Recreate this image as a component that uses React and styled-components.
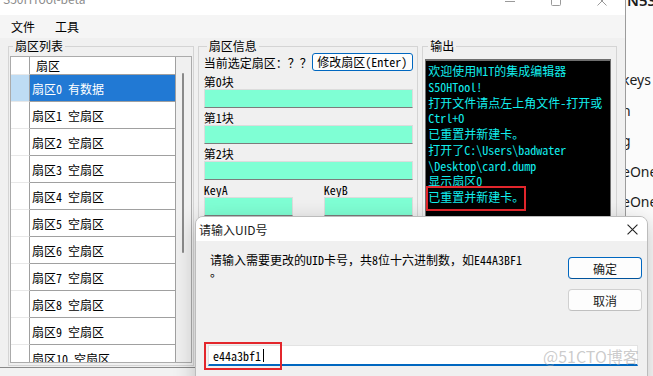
import React from 'react';
import styled, { createGlobalStyle } from 'styled-components';

const SONG = `"Noto Sans Mono CJK SC", "Noto Sans CJK SC", monospace`;
const UI = `"Noto Sans CJK SC", "Noto Sans", sans-serif`;

const GlobalStyle = createGlobalStyle`
    html, body {
        margin: 0;
        padding: 0;
        width: 653px;
        height: 376px;
        overflow: hidden;
        background: #f2f2f2;
    }
    * {
        box-sizing: border-box;
    }
`;

const Desktop = styled.div`
    position: relative;
    width: 653px;
    height: 376px;
    overflow: hidden;
    background: #f2f2f2;
    font-family: ${SONG};
    font-size: 12px;
    color: #000;
`;

/* window behind, only its left strip shows at the right edge */
const BackWindow = styled.div`
    position: absolute;
    left: 600px;
    top: -9px;
    width: 120px;
    height: 400px;
    background: #fbfbfb;
    font-family: 'Noto Sans', sans-serif;
    font-size: 14px;
    color: #1c1c1c;
    padding-left: 22px;
`;

const BackHead = styled.div`
    height: 74px;
    font-size: 15px;
    font-weight: 600;
    padding-left: 5px;
    line-height: 18px;
`;

const BackLine = styled.div`
    height: 30.5px;
    line-height: 30.5px;
`;

const MainWindow = styled.div`
    position: absolute;
    left: 0;
    top: -13px;
    width: 626px;
    height: 381px;
    background: #f0f0f0;
    border-right: 1px solid #9c9c9c;
    border-bottom: 1px solid #8a8a8a;
    display: flex;
    flex-direction: column;
`;

const TitleBar = styled.div`
    height: 28px;
    flex-shrink: 0;
    background: #fff;
    display: flex;
    align-items: center;
    padding-left: 3px;
    font-family: ${UI};
    font-size: 12px;
    color: #8c8c8c;
`;

const TitleText = styled.span`
    margin-top: -5px;
`;

const TitleControls = styled.div`
    margin-left: auto;
    display: flex;
    height: 100%;
`;

const TitleButton = styled.div`
    width: 46px;
    height: 100%;
    display: flex;
    align-items: center;
    justify-content: center;
    color: #9a9a9a;
`;

const MenuBar = styled.div`
    height: 23px;
    flex-shrink: 0;
    background: #f5f5f5;
    display: flex;
    align-items: center;
    padding-left: 1px;
`;

const MenuItem = styled.div`
    padding: 0 10px;
    line-height: 23px;
`;

const Body = styled.div`
    flex: 1;
    display: flex;
    align-items: flex-start;
    gap: 4px;
    padding: 1px 8px 0 8px;
`;

const Group = styled.fieldset`
    margin: 0;
    width: ${p => p.$w}px;
    height: 327px;
    min-width: 0;
    padding: ${p => p.$pad};
    border: 1px solid #d4d4d4;
    display: flex;
    flex-direction: column;
`;

const GroupTitle = styled.legend`
    padding: 0 2px;
    margin-left: 3px;
    line-height: 14px;
    font-size: 12px;
`;

/* ---- sector list ---- */
const ListView = styled.div`
    flex: 1;
    margin-bottom: 2px;
    display: flex;
    border: 1px solid #ababab;
    background: #fff;
    overflow: hidden;
`;

const Table = styled.div`
    width: 165px;
    display: flex;
    flex-direction: column;
`;

const Row = styled.div`
    display: flex;
    flex-shrink: 0;
    height: ${p => (p.$head ? 18 : 27)}px;
`;

const IndexCell = styled.div`
    width: 19px;
    border-right: 1px solid #a0a0a0;
    border-bottom: 1px solid #e8e8e8;
    background: ${p => (p.$sel ? '#bedcf4' : '#fff')};
`;

const NameCell = styled.div`
    flex: 1;
    display: flex;
    align-items: center;
    white-space: nowrap;
    padding-left: ${p => (p.$head ? 6 : 2)}px;
    border-right: 1px solid #a0a0a0;
    border-bottom: 1px solid #a0a0a0;
    background: ${p => (p.$sel ? '#2179d4' : '#fff')};
    color: ${p => (p.$sel ? '#fff' : '#000')};
`;

const ScrollTrack = styled.div`
    flex: 1;
    background: #f0f0f0;
    padding-top: 16px;
`;

const ScrollThumb = styled.div`
    width: 2px;
    height: 180px;
    margin: 0 auto;
    border-radius: 1px;
    background: #8a8a8a;
`;

/* ---- sector info ---- */
const InfoTop = styled.div`
    display: flex;
    align-items: center;
    height: 18px;
    margin-bottom: 1px;
    padding-right: 1px;
    white-space: nowrap;
`;

const EditButton = styled.button`
    margin-left: auto;
    flex-shrink: 0;
    width: 101px;
    height: 18px;
    padding: 0;
    border: 1px solid #0067c0;
    border-radius: 3px;
    background: #fdfdfd;
    font-family: ${SONG};
    font-size: 12px;
    color: #000;
    line-height: 16px;
`;

const FieldLabel = styled.div`
    margin-top: 2px;
    height: 15px;
    line-height: 15px;
`;

const HexBox = styled.div`
    height: 19px;
    background: #7fffd4;
    border: 1px solid #dcdcdc;
    border-bottom-color: #7c7c7c;
`;

const KeyRow = styled.div`
    display: grid;
    grid-template-columns: 89px 89px;
    column-gap: 31px;
`;

/* ---- output ---- */
const Console = styled.div`
    flex: 1;
    margin: 6px 0 2px;
    padding: 2px 2px;
    background: #000;
    border: 1px solid #6f6f6f;
    border-top-width: 2px;
    color: #12eeee;
    line-height: 15.75px;
    white-space: nowrap;
    overflow: hidden;
`;

const Marked = styled.span`
    position: relative;
    display: inline-block;
    height: 15.75px;
    &::after {
        content: '';
        position: absolute;
        left: -2px;
        right: -2px;
        top: -3px;
        bottom: -6px;
        border: 2px solid #e3262c;
    }
`;

/* ---- dialog ---- */
const Dialog = styled.div`
    position: absolute;
    left: 195px;
    top: 216px;
    width: 453px;
    height: 190px;
    background: #f0f0f0;
    border: 1px solid #bcbcbc;
    border-radius: 8px;
    box-shadow: 0 6px 22px rgba(0, 0, 0, 0.22);
    overflow: hidden;
    display: flex;
    flex-direction: column;
`;

const DialogTitleBar = styled.div`
    height: 24px;
    flex-shrink: 0;
    background: #fff;
    display: flex;
    align-items: center;
    padding-left: 3px;
    font-family: ${UI};
    font-size: 12px;
    color: #1a1a1a;
`;

const CloseButton = styled.div`
    margin-left: auto;
    width: 30px;
    height: 100%;
    display: flex;
    align-items: center;
    justify-content: center;
`;

const DialogBody = styled.div`
    flex: 1;
    display: grid;
    grid-template-columns: 1fr 74px;
    grid-template-rows: 91px 21px;
    padding: 13px 5px 0 12px;
`;

const Message = styled.div`
    padding-left: 2px;
    line-height: 12px;
`;

const ButtonColumn = styled.div`
    display: flex;
    flex-direction: column;
    gap: 10px;
    padding-top: 3px;
`;

const DialogButton = styled.button`
    width: 74px;
    height: 22px;
    padding: 0;
    border-radius: 4px;
    border: 1px solid ${p => (p.$primary ? '#0067c0' : '#d0d0d0')};
    border-bottom-color: ${p => (p.$primary ? '#00539c' : '#c0c0c0')};
    background: #fdfdfd;
    font-family: ${UI};
    font-size: 12px;
    color: #1a1a1a;
`;

const UidInput = styled.div`
    grid-column: 1 / -1;
    margin-right: 4px;
    display: flex;
    align-items: center;
    padding-left: 4px;
    background: #fff;
    border: 1px solid #e3e3e3;
    border-bottom: 2px solid #0067c0;
`;

const UidText = styled.span`
    position: relative;
    display: inline-flex;
    align-items: center;
    &::after {
        content: '';
        position: absolute;
        left: -9px;
        right: -18px;
        top: -5px;
        bottom: -6px;
        border: 2px solid #e3262c;
    }
`;

const Caret = styled.span`
    width: 1px;
    height: 13px;
    margin-left: 2px;
    background: #000;
`;

const Watermark = styled.div`
    position: absolute;
    left: 543px;
    top: 345px;
    font-family: ${UI};
    font-size: 16px;
    line-height: 22px;
    color: rgba(160, 160, 160, 0.55);
`;

const MinimizeGlyph = () => (
    <svg width="10" height="10" viewBox="0 0 10 10">
        <line x1="0" y1="5.5" x2="10" y2="5.5" stroke="currentColor" strokeWidth="1" />
    </svg>
);

const MaximizeGlyph = () => (
    <svg width="10" height="10" viewBox="0 0 10 10">
        <rect x="0.5" y="0.5" width="9" height="9" rx="1" fill="none" stroke="currentColor" strokeWidth="1" />
    </svg>
);

const CloseGlyph = ({ size = 10, color = 'currentColor' }) => (
    <svg width={size} height={size} viewBox="0 0 10 10">
        <path d="M0.5 0.5 L9.5 9.5 M9.5 0.5 L0.5 9.5" stroke={color} strokeWidth="1" fill="none" />
    </svg>
);

const sectors = Array.from({ length: 16 }, (_, i) =>
    i === 0 ? '扇区0 有数据' : `扇区${i} 空扇区`
);

const outputLines = [
    '欢迎使用M1T的集成编辑器',
    'S50HTool!',
    '打开文件请点左上角文件-打开或',
    'Ctrl+O',
    '已重置并新建卡。',
    '打开了C:\\Users\\badwater',
    '\\Desktop\\card.dump',
    '显示扇区0'
];

const backItems = ['keys', 'n', 'g', 'eOne', 'eOne', 'f', 'e', 'e'];

const App = () => {
    const selected = 0;

    return (
        <Desktop>
            <GlobalStyle />
            <BackWindow>
                <BackHead>N532</BackHead>
                {backItems.map((t, i) => (
                    <BackLine key={i}>{t}</BackLine>
                ))}
            </BackWindow>

            <MainWindow>
                <TitleBar>
                    <TitleText>S50HTool-beta</TitleText>
                    <TitleControls>
                        <TitleButton><MinimizeGlyph /></TitleButton>
                        <TitleButton><MaximizeGlyph /></TitleButton>
                        <TitleButton><CloseGlyph /></TitleButton>
                    </TitleControls>
                </TitleBar>
                <MenuBar>
                    <MenuItem>文件</MenuItem>
                    <MenuItem>工具</MenuItem>
                </MenuBar>

                <Body>
                    <Group $w={186} $pad="3px 1px 0 1px">
                        <GroupTitle>扇区列表</GroupTitle>
                        <ListView>
                            <Table>
                                <Row $head>
                                    <IndexCell />
                                    <NameCell $head>扇区</NameCell>
                                </Row>
                                {sectors.map((name, i) => (
                                    <Row key={name}>
                                        <IndexCell $sel={i === selected} />
                                        <NameCell $sel={i === selected}>{name}</NameCell>
                                    </Row>
                                ))}
                            </Table>
                            <ScrollTrack>
                                <ScrollThumb />
                            </ScrollTrack>
                        </ListView>
                    </Group>

                    <Group $w={221} $pad="0 4px 0 5px">
                        <GroupTitle>扇区信息</GroupTitle>
                        <InfoTop>
                            当前选定扇区：？？
                            <EditButton>修改扇区(Enter)</EditButton>
                        </InfoTop>
                        {[0, 1, 2].map(b => (
                            <React.Fragment key={b}>
                                <FieldLabel>第{b}块</FieldLabel>
                                <HexBox />
                            </React.Fragment>
                        ))}
                        <KeyRow>
                            <FieldLabel>KeyA</FieldLabel>
                            <FieldLabel>KeyB</FieldLabel>
                            <HexBox />
                            <HexBox />
                        </KeyRow>
                    </Group>

                    <Group $w={195} $pad="0 5px 0 2px">
                        <GroupTitle>输出</GroupTitle>
                        <Console>
                            {outputLines.map((l, i) => (
                                <div key={i}>{l}</div>
                            ))}
                            <div>
                                <Marked>已重置并新建卡。</Marked>
                            </div>
                        </Console>
                    </Group>
                </Body>
            </MainWindow>

            <Dialog>
                <DialogTitleBar>
                    请输入UID号
                    <CloseButton>
                        <CloseGlyph size={11} color="#222" />
                    </CloseButton>
                </DialogTitleBar>
                <DialogBody>
                    <Message>
                        请输入需要更改的UID卡号，共8位十六进制数，如E44A3BF1
                        <br />。
                    </Message>
                    <ButtonColumn>
                        <DialogButton $primary>确定</DialogButton>
                        <DialogButton>取消</DialogButton>
                    </ButtonColumn>
                    <UidInput>
                        <UidText>
                            e44a3bf1
                            <Caret />
                        </UidText>
                    </UidInput>
                </DialogBody>
            </Dialog>

            <Watermark>@51CTO博客</Watermark>
        </Desktop>
    );
};

export default App;
